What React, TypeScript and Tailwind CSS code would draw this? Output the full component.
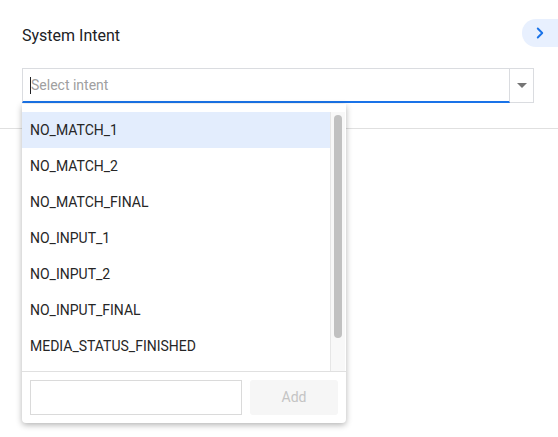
import { ChevronRight } from 'lucide-react';

const intents = [
  'NO_MATCH_1',
  'NO_MATCH_2',
  'NO_MATCH_FINAL',
  'NO_INPUT_1',
  'NO_INPUT_2',
  'NO_INPUT_FINAL',
  'MEDIA_STATUS_FINISHED',
];

const App = () => {
  return (
    <div className="relative w-[558px] h-[437px] bg-white overflow-hidden font-['Roboto',sans-serif]">
      {/* Header */}
      <div className="flex items-start justify-between pt-[19px] pl-[22px]">
        <h2 className="h-[28px] pt-[5px] flex items-center text-[16px] text-[#202124]">System Intent</h2>
        <button className="w-[36px] h-[28px] bg-[#e8f0fe] rounded-l-full flex items-center pl-[9px]">
          <ChevronRight size={18} strokeWidth={2.5} className="text-[#1a73e8]" />
        </button>
      </div>

      {/* Intent combobox */}
      <div className="flex ml-[22px] mt-[21px] w-[512px] h-[35px]">
        <div className="flex-1 flex items-center border border-[#dadce0] border-b-2 border-b-[#1a73e8] pl-[7px] pt-[1px]">
          <span className="w-px h-[17px] bg-[#202124]" />
          <span className="text-[14px] text-[#a0a0a0]">Select intent</span>
        </div>
        <div className="w-[24px] flex items-center justify-center border border-l-0 border-[#dadce0]">
          <svg width="10" height="5" viewBox="0 0 10 5">
            <path d="M0 0h10L5 5z" fill="#757575" />
          </svg>
        </div>
      </div>

      <div className="mt-[25px] border-t border-[#e0e0e0]" />

      {/* Dropdown panel */}
      <div className="absolute left-[22px] top-[104px] w-[324px] h-[319px] bg-white rounded-b-[4px] shadow-[0_2px_6px_rgba(0,0,0,0.3)] flex flex-col">
        <div className="flex h-[267px] pt-[8px]">
          <ul className="flex-1 overflow-hidden">
            {intents.map((intent, i) => (
              <li
                key={intent}
                className={`h-[36px] flex items-center pl-[8px] pt-[1px] text-[14px] text-[#262626] ${i === 0 ? 'bg-[#e3edfd]' : ''}`}
              >
                {intent}
              </li>
            ))}
          </ul>
          <div className="w-[15px] mr-px bg-[#f8f8f8] border-l border-[#e6e6e6] pt-[3px] pl-[3px]">
            <div className="w-[8px] h-[223px] rounded-full bg-[#c1c1c1]" />
          </div>
        </div>
        <div className="flex gap-[8px] border-t border-[#e0e0e0] pt-[8px] px-[8px]">
          <input className="w-[212px] h-[35px] border border-[#dadada] outline-none" />
          <button className="w-[88px] h-[35px] rounded-[3px] bg-[#f6f6f6] text-[14px] text-[#c4c4c4]">Add</button>
        </div>
      </div>
    </div>
  );
};

export default App;
